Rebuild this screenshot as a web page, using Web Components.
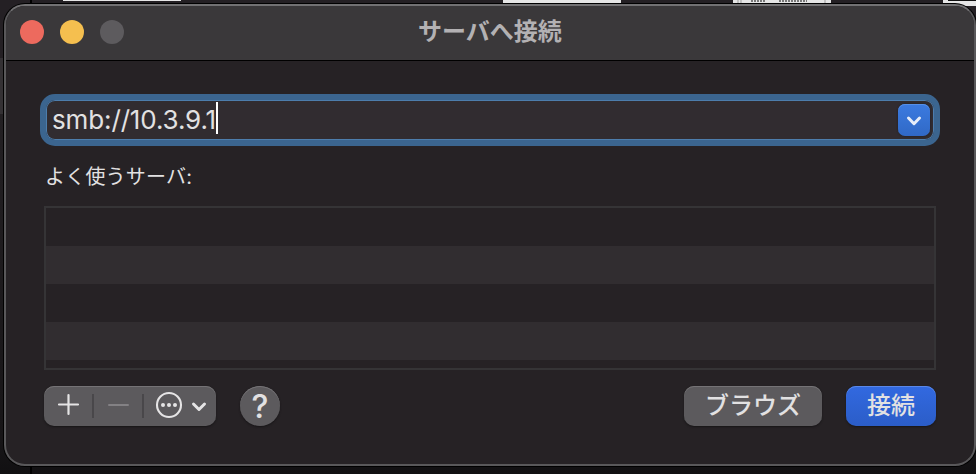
<!DOCTYPE html>
<html lang="ja">
<head>
<meta charset="utf-8">
<title>サーバへ接続</title>
<style>
  body {
    margin: 0;
    width: 976px;
    height: 474px;
    overflow: hidden;
    background: #141214;
    font-family: Inter, "Noto Sans CJK JP", sans-serif;
    color: #e2e1e2;
  }
</style>
</head>
<body>
<desk-top>
  <connect-window heading="サーバへ接続">
    <server-field value="smb://10.3.9.1"></server-field>
    <server-list label="よく使うサーバ:"></server-list>
    <tool-bar>
      <list-actions></list-actions>
      <help-button></help-button>
      <push-button class="browse" style="width: 138px">ブラウズ</push-button>
      <push-button primary style="width: 90px">接続</push-button>
    </tool-bar>
  </connect-window>
</desk-top>

<script>
class BaseElement extends HTMLElement {
  constructor() {
    super();
    this.shadowDOM = this.attachShadow({ mode: "open" });
  }

  connectedCallback() {
    this.render();
  }
}

class DeskTop extends BaseElement {
  render() {
    this.shadowDOM.innerHTML = `
      <style>
        :host {
          display: block;
          position: relative;
          box-sizing: border-box;
          height: 474px;
          padding: 4px 0 0 4px;
          background: linear-gradient(#242024 0, #242024 58px, #343134 58px, #343134 114px, #232023 114px, #171517 440px, #111012 474px);
        }
        svg {
          position: absolute;
          left: 0;
          top: 0;
        }
        ::slotted(*) {
          position: relative;
        }
      </style>
      <svg width="976" height="474">
        <path d="M31 0v474" stroke="#000" stroke-width="2"/>
        <path d="M63 0h118v1H63zM503 0h118v3H503zM733 0h98v3h-98zM943 0h33v6h-33z" fill="#e6e6e6"/>
        <path d="M948 0h28v1h-28z" fill="#111"/>
        <path d="M738 0v3M741 0v3M825 0v3" stroke="#999"/>
        <path d="M751 1h15M779 1h28" stroke="#777" stroke-width="2" stroke-dasharray="2 1"/>
      </svg>
      <slot></slot>
    `;
  }
}

class ConnectWindow extends BaseElement {
  render() {
    this.shadowDOM.innerHTML = `
      <style>
        :host {
          display: block;
          box-sizing: border-box;
          width: 972px;
          height: 462px;
          border: 2px solid #59585a;
          border-top-color: #727173;
          border-radius: 21px;
          overflow: hidden;
          background: #262225;
          box-shadow: 0 0 0 1px #000;
        }
        header {
          display: grid;
          grid-template-columns: 1fr auto 1fr;
          align-items: center;
          box-sizing: border-box;
          height: 55px;
          padding: 0 14px 3px;
          background: #3a383a;
          border-bottom: 1px solid #000;
        }
        .lights {
          display: flex;
          gap: 16px;
        }
        i {
          width: 24px;
          height: 24px;
          border-radius: 50%;
          background: #5d5b5e;
        }
        i:nth-child(1) { background: #ed6a5e; }
        i:nth-child(2) { background: #f5bf4f; }
        h1 {
          margin: 0;
          font-size: 24px;
          line-height: 34px;
          font-weight: 700;
          color: #b3b1b3;
        }
        main {
          padding: 33px 34px 0;
        }
      </style>
      <header>
        <div class="lights"><i></i><i></i><i></i></div>
        <h1>${this.getAttribute("heading")}</h1>
      </header>
      <main><slot></slot></main>
    `;
  }
}

class ServerField extends BaseElement {
  render() {
    this.shadowDOM.innerHTML = `
      <style>
        :host {
          display: flex;
          align-items: center;
          box-sizing: border-box;
          width: 900px;
          height: 52px;
          border: 6px solid #3b658f;
          border-radius: 15px;
          padding: 0 4px 0 6px;
          background: #312c30;
          box-shadow: inset 0 0 0 1px #4d7dac;
        }
        .text {
          font-size: 26px;
          line-height: 36px;
          letter-spacing: -0.13px;
          margin-bottom: 1px;
        }
        .caret {
          width: 2px;
          height: 32px;
          margin-bottom: 4px;
          background: #fff;
        }
        .arrow {
          display: flex;
          margin-left: auto;
          border-radius: 7px;
          background: linear-gradient(#3b7ae0, #3069c6);
          box-shadow: 0 0 2px #1b1a1d, inset 0 1px #5690e8;
        }
      </style>
      <span class="text">${this.getAttribute("value")}</span>
      <span class="caret"></span>
      <span class="arrow">
        <svg width="32" height="32" fill="none" stroke="#e6edf9" stroke-width="3" stroke-linecap="round" stroke-linejoin="round">
          <path d="M10.5 14l5.5 5.7 5.5-5.7"/>
        </svg>
      </span>
    `;
  }
}

class ServerList extends BaseElement {
  render() {
    this.shadowDOM.innerHTML = `
      <style>
        :host {
          display: block;
          margin: 16px 4px 0;
        }
        .label {
          padding-left: 1px;
          font-size: 20px;
          line-height: 30px;
          letter-spacing: 0.2px;
        }
        .rows {
          box-sizing: border-box;
          width: 892px;
          height: 164px;
          margin-top: 14px;
          border: 2px solid #353436;
          background: repeating-linear-gradient(#262225 0 38px, #312d30 38px 76px);
        }
      </style>
      <div class="label">${this.getAttribute("label")}</div>
      <div class="rows"></div>
    `;
  }
}

class ToolBar extends BaseElement {
  render() {
    this.shadowDOM.innerHTML = `
      <style>
        :host {
          display: flex;
          gap: 24px;
          margin: 16px 4px 0;
        }
        ::slotted(.browse) {
          margin-left: auto;
        }
      </style>
      <slot></slot>
    `;
  }
}

class ListActions extends BaseElement {
  render() {
    this.shadowDOM.innerHTML = `
      <style>
        :host {
          display: block;
          width: 172px;
          height: 40px;
          border-radius: 10px;
          background: #5c5a5d;
          box-shadow: inset 0 1px #757376, 0 1px 2px #171517;
        }
        svg {
          display: block;
        }
      </style>
      <svg width="172" height="40" fill="none" stroke="#e5e4e5" stroke-linecap="round" stroke-linejoin="round">
        <path d="M49 8v24M99 8v24" stroke="#49474a" stroke-width="2" stroke-linecap="butt"/>
        <path d="M15 18.5h19M24.5 9v19" stroke-width="2.2"/>
        <path d="M65 19h19" stroke="#838184" stroke-width="2"/>
        <circle cx="125" cy="19" r="12" stroke-width="2.1"/>
        <g fill="#e5e4e5" stroke="none">
          <circle cx="119" cy="19" r="2"/>
          <circle cx="125" cy="19" r="2"/>
          <circle cx="131" cy="19" r="2"/>
        </g>
        <path d="M149.5 18l5.5 5.5 5.5-5.5" stroke-width="3"/>
      </svg>
    `;
  }
}

class HelpButton extends BaseElement {
  render() {
    this.shadowDOM.innerHTML = `
      <style>
        :host {
          display: flex;
          justify-content: center;
          width: 40px;
          height: 40px;
          border-radius: 50%;
          background: #5c5a5d;
          box-shadow: inset 0 1px #757376, 0 1px 2px #171517;
          font-size: 32px;
          line-height: 41px;
          font-weight: 500;
        }
      </style>
      <span>?</span>
    `;
  }
}

class PushButton extends BaseElement {
  render() {
    this.shadowDOM.innerHTML = `
      <style>
        :host {
          display: flex;
          justify-content: center;
          height: 40px;
          border-radius: 10px;
          background: #5c5a5d;
          box-shadow: inset 0 1px #757376, 0 1px 2px #171517;
          font-size: 24px;
          line-height: 39px;
          font-weight: 500;
        }
        :host([primary]) {
          background: linear-gradient(#3269e0, #2b5dc8);
          box-shadow: inset 0 1px #5a88e8, 0 1px 2px #171517;
        }
      </style>
      <span><slot></slot></span>
    `;
  }
}

customElements.define("desk-top", DeskTop);
customElements.define("connect-window", ConnectWindow);
customElements.define("server-field", ServerField);
customElements.define("server-list", ServerList);
customElements.define("tool-bar", ToolBar);
customElements.define("list-actions", ListActions);
customElements.define("help-button", HelpButton);
customElements.define("push-button", PushButton);
</script>
</body>
</html>
